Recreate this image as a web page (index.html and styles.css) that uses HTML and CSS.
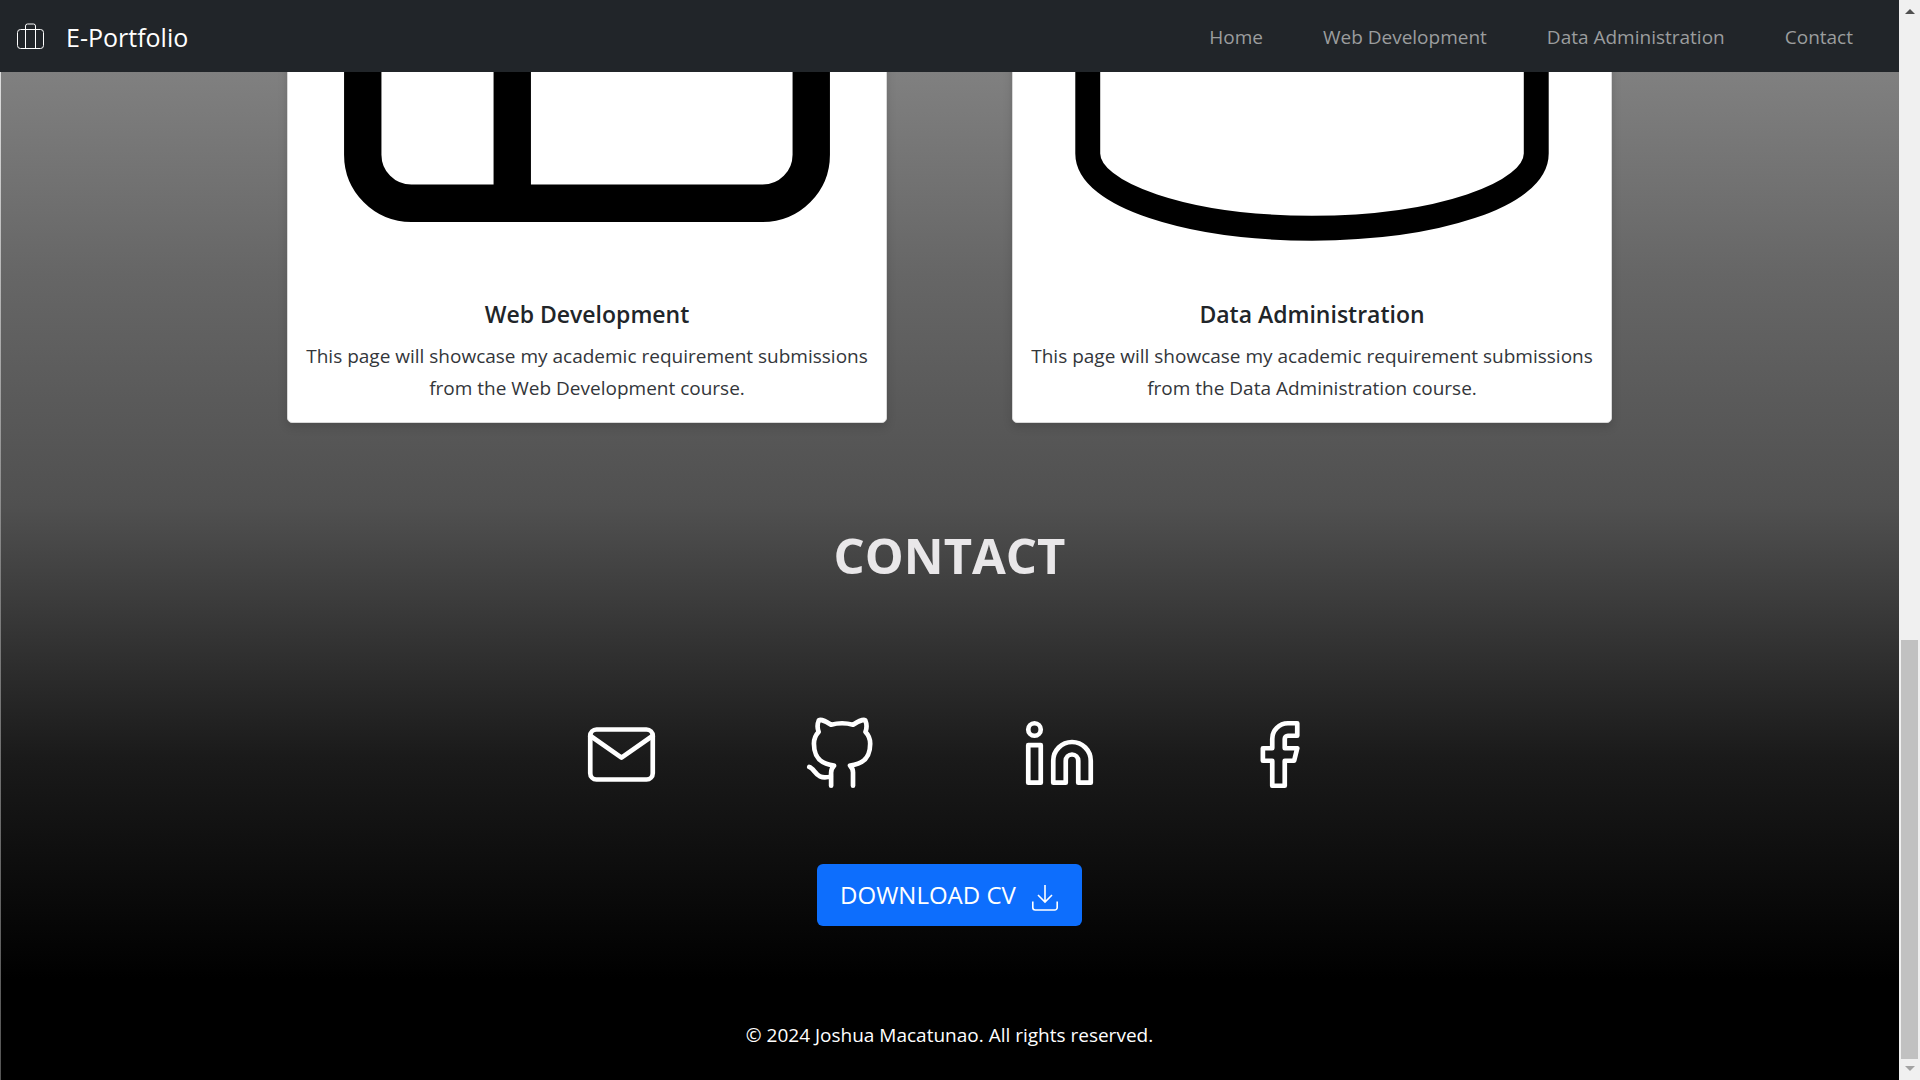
FILE: index.html
```html
<!DOCTYPE html>
<html lang="en">
<head>
<meta charset="utf-8">
<meta name="viewport" content="width=device-width, initial-scale=1">
<title>E-Portfolio</title>
<link rel="stylesheet" href="styles.css">
</head>
<body>
<div class="page">
  <header class="navbar">
    <a class="brand" href="#home">
      <svg class="brand-icon" viewBox="0 0 28 28" fill="none" stroke="currentColor" aria-hidden="true">
        <rect x="1.500" y="6.500" width="26" height="19" rx="3"/>
        <path d="M9.500 25.500V3a2 2 0 0 1 2-2h6a2 2 0 0 1 2 2v22.500"/>
      </svg>
      <span>E-Portfolio</span>
    </a>
    <nav class="nav-links">
      <a href="#home">Home</a>
      <a href="#web">Web Development</a>
      <a href="#data">Data Administration</a>
      <a href="#contact">Contact</a>
    </nav>
  </header>
  <main class="content">
    <section class="cards">
      <article class="card" id="web">
        <svg class="card-image" viewBox="0 0 16 16" fill="none" stroke="#000" aria-hidden="true">
          <rect x="2" y="2" width="12" height="12" rx="1.3"/>
          <path d="M6 2v12M6 6h8"/>
        </svg>
        <div class="card-body">
          <h2 class="card-title">Web Development</h2>
          <p class="card-text">This page will showcase my academic requirement submissions from the Web Development course.</p>
        </div>
      </article>
      <article class="card" id="data">
        <svg class="card-image" viewBox="0 0 24 24" fill="none" stroke="#000" aria-hidden="true">
          <ellipse cx="12" cy="5" rx="9" ry="3"/>
          <path d="M3 5v14c0 1.66 4 3 9 3s9-1.34 9-3V5"/>
        </svg>
        <div class="card-body">
          <h2 class="card-title">Data Administration</h2>
          <p class="card-text">This page will showcase my academic requirement submissions from the Data Administration course.</p>
        </div>
      </article>
    </section>
    <section class="contact" id="contact">
      <h1 class="contact-title">CONTACT</h1>
      <div class="socials">
        <a href="#mail" aria-label="Email">
          <svg viewBox="0 0 24 24"><rect x="2" y="4" width="20" height="16" rx="2"/><path d="M22 6l-10 7L2 6"/></svg>
        </a>
        <a href="#github" aria-label="GitHub">
          <svg viewBox="0 0 24 24"><path d="M9 19c-5 1.5-5-2.5-7-3m14 6v-3.87a3.37 3.37 0 0 0-.94-2.61c3.14-.35 6.44-1.54 6.44-7A5.44 5.44 0 0 0 20 4.77 5.07 5.07 0 0 0 19.91 1S18.73.65 16 2.48a13.38 13.38 0 0 0-7 0C6.27.65 5.09 1 5.09 1A5.07 5.07 0 0 0 5 4.77a5.44 5.44 0 0 0-1.5 3.78c0 5.42 3.3 6.61 6.44 7A3.37 3.37 0 0 0 9 18.13V22"/></svg>
        </a>
        <a href="#linkedin" aria-label="LinkedIn">
          <svg viewBox="0 0 24 24"><path d="M16 8a6 6 0 0 1 6 6v7h-4v-7a2 2 0 0 0-4 0v7h-4v-7a6 6 0 0 1 6-6z"/><rect x="2" y="9" width="4" height="12"/><circle cx="4" cy="4" r="2"/></svg>
        </a>
        <a href="#facebook" aria-label="Facebook">
          <svg viewBox="0 0 24 24"><path d="M18 2h-3a5 5 0 0 0-5 5v3H7v4h3v8h4v-8h3l1-4h-4V7a1 1 0 0 1 1-1h3z"/></svg>
        </a>
      </div>
      <button class="download" type="button">
        <span>DOWNLOAD CV</span>
        <svg class="download-icon" viewBox="0 0 26 26" fill="none" stroke="currentColor" stroke-width="1.6" aria-hidden="true">
          <path d="M13 0v17M6 10l7 7 7-7M.8 16.5v6a2.5 2.5 0 0 0 2.500 2.500h19.400a2.500 2.500 0 0 0 2.500-2.500v-6"/>
        </svg>
      </button>
    </section>
    <footer class="footer">© 2024 Joshua Macatunao. All rights reserved.</footer>
  </main>
</div>
<div class="scrollbar" aria-hidden="true">
  <span class="arrow arrow-up"></span>
  <span class="thumb"></span>
  <span class="arrow arrow-down"></span>
</div>
</body>
</html>
```
FILE: styles.css
```css
* { box-sizing: border-box; }

body {
  margin: 0;
  height: 100vh;
  display: flex;
  overflow: hidden;
  font-family: "Segoe UI", "Open Sans", "Noto Sans", sans-serif;
  font-size: 19px;
  line-height: 32px;
  color: #212529;
}

a { color: inherit; text-decoration: none; }

.page {
  flex: 1;
  min-width: 0;
  display: flex;
  flex-direction: column;
}

.navbar {
  flex: none;
  height: 72px;
  padding: 2px 46px 0 16px;
  display: flex;
  align-items: center;
  justify-content: space-between;
  background: #212529;
  z-index: 1;
}

.brand {
  display: flex;
  align-items: center;
  gap: 22px;
  font-size: 25px;
  color: #fff;
}

.brand-icon { width: 28px; height: 28px; }

.nav-links {
  display: flex;
  gap: 60px;
  color: #9b9d9e;
}

.content {
  flex: 1;
  min-height: 0;
  display: flex;
  flex-direction: column;
  justify-content: flex-end;
  overflow: hidden;
  background:
    linear-gradient(#ddd, #808080 50%, #555) 0 0 / 1px 100% no-repeat,
    linear-gradient(#808080 0%, #666 20%, #505050 43%, #1a1a1a 68%, #000 90%);
}

.cards {
  display: flex;
  justify-content: center;
  gap: 125px;
}

.card {
  width: 600px;
  border: 1px solid #d8d8d8;
  border-radius: 5px;
  background: #fff;
  box-shadow: 0 4px 10px rgba(0, 0, 0, .15);
}

.card-image {
  display: block;
  width: 100%;
  aspect-ratio: 1;
}

.card-body {
  padding: 20px 16px;
  text-align: center;
}

.card-title {
  margin: 0 0 10px;
  font-size: 23px;
  font-weight: 600;
  line-height: 32px;
}

.card-text {
  margin: 0 0 -2px;
  color: #33363a;
}

.contact {
  padding-top: 100px;
  display: flex;
  flex-direction: column;
  align-items: center;
}

.contact-title {
  margin: 0 0 130px;
  font-size: 49px;
  font-weight: 700;
  line-height: 64px;
  color: #e9e7e9;
}

.socials {
  display: flex;
  gap: 144px;
  color: #fff;
}

.socials svg {
  display: block;
  width: 75px;
  height: 75px;
  fill: none;
  stroke: currentColor;
  stroke-width: 1.5;
  stroke-linecap: round;
  stroke-linejoin: round;
}

.download {
  margin-top: 72px;
  height: 62px;
  padding: 0 24px 0 23px;
  display: flex;
  align-items: center;
  gap: 16px;
  border: 0;
  border-radius: 6px;
  background: #0d6efd;
  color: #fff;
  font: inherit;
  font-size: 24px;
}

.download-icon {
  width: 26px;
  height: 26px;
  margin-top: 6px;
}

.footer {
  padding: 93px 0 29px;
  text-align: center;
  color: #fff;
}

.scrollbar {
  flex: none;
  width: 21px;
  display: flex;
  flex-direction: column;
  align-items: center;
  background: #f0f0f0;
}

.arrow {
  border: 5px solid transparent;
}

.arrow-up {
  margin-top: 4px;
  border-bottom-color: #505050;
}

.thumb {
  width: 17px;
  height: 38.8%;
  margin-top: auto;
  background: #c1c1c1;
}

.arrow-down {
  margin: 7px 0 4px;
  border-top-color: #a3a3a3;
}
```
